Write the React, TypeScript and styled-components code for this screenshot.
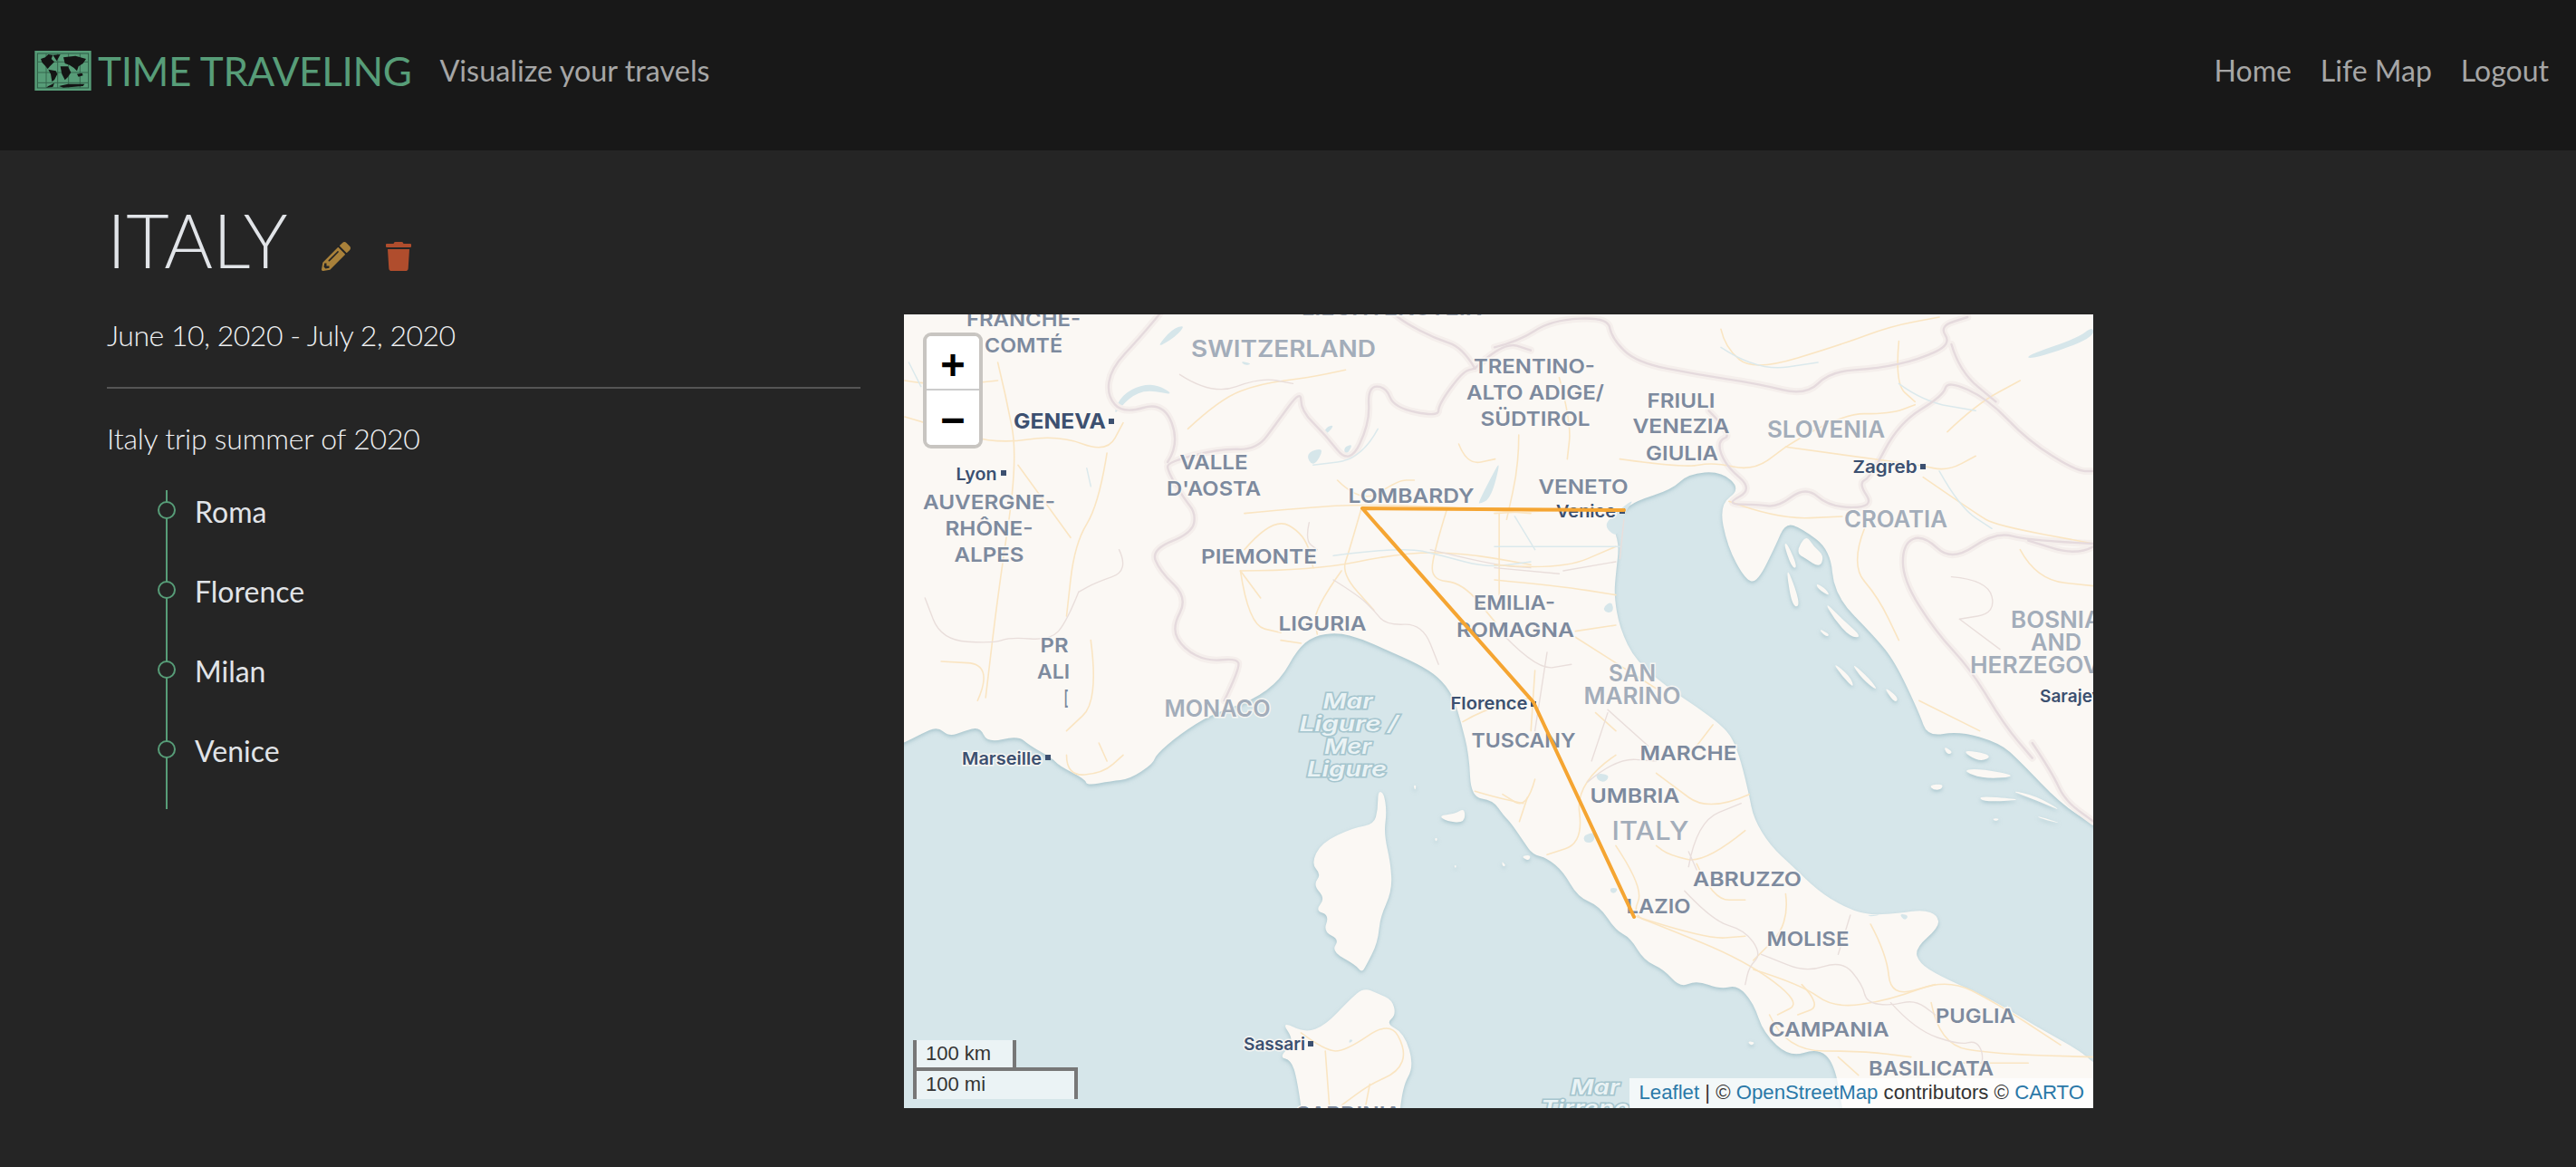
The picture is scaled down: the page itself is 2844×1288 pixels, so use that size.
import React from "react";
import styled, { createGlobalStyle } from "styled-components";
import { FaPencilAlt, FaTrash } from "react-icons/fa";

const GlobalStyle = createGlobalStyle`
  html, body {
    margin: 0;
    padding: 0;
    background: #252525;
  }
  body {
    font-family: "Lato", "Liberation Sans", sans-serif;
    color: #e1e4e8;
  }
`;

const Page = styled.div`
  width: 2844px;
  height: 1288px;
  overflow: hidden;
  background: #252525;
`;

const NavBar = styled.nav`
  height: 166px;
  display: flex;
  align-items: center;
  justify-content: space-between;
  padding: 0 30px 11px 38px;
  background: #181818;
  box-sizing: border-box;
`;

const Brand = styled.div`
  display: flex;
  align-items: center;
`;

const LogoMark = styled.svg`
  width: 63px;
  height: 44px;
`;

const BrandName = styled.span`
  margin-left: 7px;
  font-size: 44px;
  font-weight: 400;
  letter-spacing: -0.35px;
  color: #579d78;
  line-height: 1;
`;

const Tagline = styled.span`
  margin-left: 31px;
  font-size: 32.4px;
  color: #a6a6a6;
`;

const NavLinks = styled.div`
  display: flex;
  gap: 32px;
`;

const NavLink = styled.a`
  font-size: 32px;
  color: #a6a6a6;
`;

const Content = styled.main`
  padding: 0 0 0 118px;
`;

const TitleRow = styled.div`
  height: 181px;
  display: flex;
  align-items: flex-start;
`;

const Title = styled.h1`
  margin: 58px 0 0 0;
  font-size: 82px;
  line-height: 80px;
  font-weight: 300;
  color: #e1e4e8;
`;

const IconButton = styled.span<{ $color: string; $gap: number }>`
  display: flex;
  margin: 101px 0 0 ${({ $gap }) => $gap}px;
  color: ${({ $color }) => $color};
  font-size: 32px;
`;

const Columns = styled.div`
  display: grid;
  grid-template-columns: 832px 1313px;
  column-gap: 48px;
`;

const Summary = styled.section`
  display: flex;
  flex-direction: column;
`;

const DateRange = styled.p`
  margin: 0;
  padding-top: 3px;
  font-size: 32px;
  line-height: 40px;
  font-weight: 300;
  letter-spacing: -0.5px;
  color: #eef0f2;
`;

const Divider = styled.hr`
  width: 100%;
  height: 2px;
  margin: 37px 0 0 0;
  border: 0;
  background: #555;
`;

const Description = styled.p`
  margin: 35px 0 0 0;
  font-size: 32px;
  line-height: 40px;
  font-weight: 300;
  letter-spacing: -0.2px;
  color: #eef0f2;
`;

const Timeline = styled.ul`
  position: relative;
  width: fit-content;
  margin: 37px 0 0 65px;
  padding: 0;
  list-style: none;
  border-left: 2px solid #579d78;
`;

const Stop = styled.li`
  position: relative;
  height: 88px;
  padding-left: 30px;
  font-size: 32px;
  line-height: 48px;
  color: #e1e4e8;

  &::before {
    content: "";
    position: absolute;
    left: -11px;
    top: 12px;
    width: 16px;
    height: 16px;
    border: 2px solid #579d78;
    border-radius: 50%;
    background: #252525;
  }
`;

const MapFrame = styled.div`
  position: relative;
  width: 1313px;
  height: 876px;
  overflow: hidden;
  background: #d6e6ea;
`;

const MapCanvas = styled.svg`
  display: block;
  width: 100%;
  height: 100%;
`;

const LandMass = styled.g`
  fill: #fbf8f4;
  filter: drop-shadow(0 2px 2px rgba(130, 170, 180, 0.55));
`;

const Water = styled.path`
  fill: #d6e6ea;
`;

const lineStyles = {
  road: "stroke: #fae5c2; stroke-width: 1.6px;",
  river: "stroke: #dbe9ec; stroke-width: 1.5px;",
  region: "stroke: #e9dedb; stroke-width: 1.4px;",
  halo: "stroke: #f5efec; stroke-width: 8px;",
  border: "stroke: #e5dadd; stroke-width: 2.4px;",
};

const MapLine = styled.path<{ $kind: keyof typeof lineStyles }>`
  fill: none;
  stroke-linejoin: round;
  stroke-linecap: round;
  vector-effect: non-scaling-stroke;
  ${({ $kind }) => lineStyles[$kind]}
`;

const labelStyles = {
  region: "fill: #7d8a9e; font-weight: 600; font-size: 22px;",
  country: "fill: #a3adba; font-weight: 600; font-size: 25px;",
  big: "fill: #a3adba; font-weight: 500; font-size: 28px;",
  city: "fill: #3c5070; font-weight: 600; font-size: 19px;",
  capital: "fill: #3c5070; font-weight: 700; font-size: 23px;",
  sea: "fill: #eaf3f5; stroke: #a5c5ce !important; font-weight: 600; font-style: italic; font-size: 23px;",
};

const MapLabel = styled.text<{ $kind: keyof typeof labelStyles }>`
  font-family: "Inter", "Liberation Sans", sans-serif;
  text-anchor: middle;
  paint-order: stroke;
  stroke: rgba(251, 248, 244, 0.85);
  stroke-width: 3px;
  ${({ $kind }) => labelStyles[$kind]}
`;

const CityDot = styled.rect`
  fill: #3c5070;
`;

const Route = styled.polyline`
  fill: none;
  stroke: #f5a532;
  stroke-width: 4px;
  stroke-linejoin: round;
  stroke-linecap: round;
`;

const ZoomControl = styled.div`
  position: absolute;
  top: 20px;
  left: 21px;
  display: flex;
  flex-direction: column;
  border: 4px solid #c8c5c1;
  border-radius: 9px;
  overflow: hidden;
`;

const ZoomButton = styled.a`
  box-sizing: border-box;
  width: 58px;
  height: 60px;
  padding-top: 4px;
  display: flex;
  align-items: center;
  justify-content: center;
  background: #fff;
  color: #000;
  font-family: "DejaVu Sans Mono", "Liberation Mono", monospace;
  font-size: 44px;
  font-weight: 700;
  line-height: 56px;

  &:first-child {
    border-bottom: 2px solid #ccc;
  }
`;

const ScaleControl = styled.div`
  position: absolute;
  left: 10px;
  bottom: 10px;
  display: flex;
  flex-direction: column;
  align-items: flex-start;
`;

const ScaleLine = styled.div<{ $width: number; $lower?: boolean }>`
  box-sizing: border-box;
  width: ${({ $width }) => $width}px;
  height: ${({ $lower }) => ($lower ? 35 : 34)}px;
  margin-top: ${({ $lower }) => ($lower ? -4 : 0)}px;
  padding: 0 10px;
  border: 4px solid #777;
  border-top-width: ${({ $lower }) => ($lower ? 4 : 0)}px;
  border-bottom-width: ${({ $lower }) => ($lower ? 0 : 4)}px;
  background: rgba(255, 255, 255, 0.5);
  font-family: "Liberation Sans", Arial, sans-serif;
  font-size: 22px;
  line-height: 30px;
  color: #333;
`;

const Attribution = styled.div`
  position: absolute;
  right: 0;
  bottom: 0;
  height: 33px;
  padding: 0 10px;
  background: rgba(255, 255, 255, 0.7);
  font-family: "Liberation Sans", Arial, sans-serif;
  font-size: 22.2px;
  line-height: 31px;
  color: #333;
  white-space: nowrap;
`;

const AttributionLink = styled.a`
  color: #2a78a8;
`;

// rounds a traced M/L outline into quadratic curves so the coast doesn't look faceted
const smooth = (d: string) =>
  d
    .split(/(?=M)/)
    .map((sub) => {
      const closed = sub.trim().endsWith("Z");
      const pts = [...sub.matchAll(/(-?[\d.]+)[ ,](-?[\d.]+)/g)].map((m) => [Number(m[1]), Number(m[2])]);
      const mid = (a: number[], b: number[]) => `${(a[0] + b[0]) / 2} ${(a[1] + b[1]) / 2}`;
      if (pts.length < 3) return sub;
      if (closed) {
        let out = `M${mid(pts[pts.length - 1], pts[0])}`;
        pts.forEach((p, i) => {
          out += `Q${p[0]} ${p[1]} ${mid(p, pts[(i + 1) % pts.length])}`;
        });
        return out + "Z";
      }
      let out = `M${pts[0][0]} ${pts[0][1]}`;
      for (let i = 1; i < pts.length - 1; i++) {
        out += `Q${pts[i][0]} ${pts[i][1]} ${mid(pts[i], pts[i + 1])}`;
      }
      const last = pts[pts.length - 1];
      return `${out}L${last[0]} ${last[1]}`;
    })
    .join("");

// crop sheets: the route and outlines were traced per quadrant of the map
const sheets = {
  nw: "translate(990 340) scale(.4464 .3333)",
  ne: "translate(1650 340) scale(.4464 .3333)",
  sw: "translate(990 820) scale(.4464 .3333)",
  se: "translate(1650 820) scale(.4464 .3333)",
};

const mapLines: { sheet: keyof typeof sheets; kind: keyof typeof lineStyles; d: string }[] = [
  { sheet: "nw", kind: "road", d: "M250 180L270 290L300 500L250 950L220 1290" },
  { sheet: "nw", kind: "road", d: "M20 360L120 400L250 450L400 420L520 480L560 380" },
  { sheet: "nw", kind: "road", d: "M520 480L500 650L440 780L420 1020" },
  { sheet: "nw", kind: "road", d: "M20 240L110 260L250 240M300 520L430 760" },
  { sheet: "nw", kind: "road", d: "M720 400L800 300L900 250L1020 230L1110 205" },
  { sheet: "nw", kind: "road", d: "M860 680L1020 660L1150 650L1380 660L1568 680" },
  { sheet: "nw", kind: "road", d: "M860 800L930 690L1010 750L1030 860" },
  { sheet: "nw", kind: "road", d: "M850 870L1030 870L1250 810L1400 810L1568 850" },
  { sheet: "nw", kind: "road", d: "M850 870L870 1050L950 1075M850 870L900 960" },
  { sheet: "nw", kind: "road", d: "M1100 870L1030 1000L1040 1080" },
  { sheet: "nw", kind: "road", d: "M1150 660L1120 800L1100 880L1180 1000" },
  { sheet: "nw", kind: "road", d: "M1090 570L1150 650L1240 570L1280 570" },
  { sheet: "nw", kind: "road", d: "M1360 670L1330 800L1320 900L1400 910L1480 1040" },
  { sheet: "nw", kind: "road", d: "M1490 680L1490 950M1390 450L1410 520L1480 500" },
  { sheet: "nw", kind: "road", d: "M480 1100L500 1300L420 1400M200 1300L240 1180L110 1170" },
  { sheet: "nw", kind: "road", d: "M1400 1370L1450 1330L1568 1290M950 1100L1000 1110" },
  { sheet: "nw", kind: "river", d: "M30 180L60 260M470 530L480 590M1190 400L1150 500L1030 520" },
  { sheet: "nw", kind: "river", d: "M1080 820L1250 790L1350 820L1460 860L1568 840" },
  { sheet: "nw", kind: "region", d: "M450 940L420 1040L380 1100L280 1090L240 1110L110 1100L70 960" },
  { sheet: "nw", kind: "region", d: "M550 800L575 870L490 910L450 940M700 220L780 290L900 230L980 250" },
  { sheet: "nw", kind: "region", d: "M1080 900L1140 950L1180 1000L1210 1050L1300 1045L1340 1180" },
  { sheet: "nw", kind: "region", d: "M1020 710L1010 770L1040 800M1320 800L1470 850L1568 860" },
  { sheet: "ne", kind: "road", d: "M60 420L60 520L30 700M160 230L190 380L180 500" },
  { sheet: "ne", kind: "road", d: "M0 680L140 670L310 670M310 500L470 530L540 510L640 540L720 460" },
  { sheet: "ne", kind: "road", d: "M720 460L850 350L980 350L1040 320M1000 110L990 250L1040 310" },
  { sheet: "ne", kind: "road", d: "M720 460L880 490L1050 520L1120 540L1190 490" },
  { sheet: "ne", kind: "road", d: "M1060 560L1190 680L1240 720L1481 780M1120 410L1190 320L1300 240" },
  { sheet: "ne", kind: "road", d: "M580 640L700 700L860 690M915 730L880 850L950 960L1000 1100" },
  { sheet: "ne", kind: "road", d: "M560 70L570 130L640 210L860 120L980 60L1100 30" },
  { sheet: "ne", kind: "road", d: "M0 900L160 920L300 950M0 850L160 870L300 790M200 1070L300 1050" },
  { sheet: "ne", kind: "road", d: "M200 1090L400 1260M100 1200L90 1400M250 1340L300 1400M540 1380L500 1450" },
  { sheet: "ne", kind: "road", d: "M1300 800L1340 900L1481 920M1050 1300L1200 1400" },
  { sheet: "ne", kind: "river", d: "M560 130L650 210L800 180M1000 250L1060 310L1190 340M1100 540L1150 660L1230 730" },
  { sheet: "ne", kind: "river", d: "M0 790L200 790L310 790M50 690L100 800" },
  { sheet: "ne", kind: "region", d: "M320 700L310 830M160 880L0 860M170 870L300 840" },
  { sheet: "ne", kind: "region", d: "M1150 1030L1250 1130M1130 890L1220 900L1240 1010L1150 1030M0 1050L100 1200L190 1180" },
  { sheet: "ne", kind: "region", d: "M100 1400L130 1140M280 1330L380 1450M240 1500L280 1340" },
  { sheet: "se", kind: "road", d: "M100 120L80 220L20 170M300 40L200 130L220 330L130 370" },
  { sheet: "se", kind: "road", d: "M300 340L370 480L340 570L400 600L620 720L760 860L700 900" },
  { sheet: "se", kind: "road", d: "M340 570L520 650L620 640M500 400L540 520L620 520M720 500L730 600L640 720" },
  { sheet: "se", kind: "road", d: "M630 170L530 230L430 130L400 100M620 290L520 400L430 370L400 340" },
  { sheet: "se", kind: "road", d: "M640 750L760 800L840 880L980 850L1120 780L1240 860L1400 1000" },
  { sheet: "se", kind: "road", d: "M680 900L720 1020L910 1020L1030 1040M930 600L970 700L980 840L1090 800" },
  { sheet: "se", kind: "road", d: "M760 800L810 870L750 900M1080 860L1100 1000L1240 1030L1481 1040" },
  { sheet: "se", kind: "road", d: "M850 1040L900 1100M1150 1060L1320 1060" },
  { sheet: "se", kind: "region", d: "M230 130L300 50L400 60M480 410L500 260L610 200M480 360L500 420" },
  { sheet: "se", kind: "region", d: "M470 490L540 590L620 620L660 700L630 740L620 800" },
  { sheet: "se", kind: "region", d: "M660 700L680 710L770 760L860 720L910 800L920 860L980 870L1040 850L1090 900" },
  { sheet: "se", kind: "region", d: "M880 570L850 700M980 860L1040 950L1150 1000L1190 985L1210 1030L1200 1100" },
  { sheet: "sw", kind: "road", d: "M420 40L420 110L510 100L560 40M500 0L520 60" },
  { sheet: "sw", kind: "road", d: "M1000 960L1060 1020L1110 1020L1220 920L1260 1020L1240 1090L1170 1130L1100 1200" },
  { sheet: "sw", kind: "road", d: "M1060 1020L1070 1200M1170 1130L1160 1200" },
  { sheet: "sw", kind: "road", d: "M1430 160L1480 180L1550 200M1540 260L1560 180" },
];

const borderLines: { sheet: keyof typeof sheets; d: string }[] = [
  { sheet: "nw", d: "M810 1300L850 1190L840 1160L770 1170L710 1130L680 1060L720 960L650 870L630 800L730 745L740 680L710 630L670 540L670 510L800 465L890 470L940 380L1000 270L1000 340L1060 420L1120 520L1170 380L1165 260L1210 260L1230 330L1340 360L1340 320L1400 210L1430 200" },
  { sheet: "nw", d: "M670 510L700 450L660 310L560 350L520 290L530 200L600 100L650 20" },
  { sheet: "nw", d: "M1430 200L1400 130L1330 100L1260 50L1230 20" },
  { sheet: "nw", d: "M1430 200L1500 110L1568 140" },
  { sheet: "ne", d: "M0 130L60 110L140 40L280 30L290 100L350 180L500 220L650 250L770 290L830 210L950 200L1050 170L1130 120L1100 60L1170 30" },
  { sheet: "ne", d: "M530 340L590 420L550 440L570 520L640 600L570 650L650 650L700 660L770 590L830 660L940 660L900 580L930 560L1000 380L1110 290L1120 240L1220 300L1320 440L1440 540L1481 540" },
  { sheet: "ne", d: "M1130 120L1150 210L1240 310" },
  { sheet: "ne", d: "M1481 780L1320 770L1240 740L1130 840L1060 750L1010 780L1010 900L1090 1070L1180 1200L1260 1380L1330 1490" },
  { sheet: "ne", d: "M1481 790L1440 820L1320 770" },
  { sheet: "se", d: "M1330 0L1380 100L1410 190L1481 260" },
];

const labels: { kind: keyof typeof labelStyles; text: string; x: number; y: number; w: number }[] = [
  { kind: "region", text: "FRANCHE-", x: 1130, y: 360, w: 126 },
  { kind: "region", text: "COMTÉ", x: 1130, y: 389, w: 86 },
  { kind: "country", text: "SWITZERLAND", x: 1417, y: 394, w: 204 },
  { kind: "country", text: "LIECHTENSTEIN", x: 1537, y: 348, w: 200 },
  { kind: "capital", text: "GENEVA", x: 1170, y: 473, w: 102 },
  { kind: "city", text: "Lyon", x: 1078, y: 530, w: 45 },
  { kind: "region", text: "AUVERGNE-", x: 1092, y: 562, w: 146 },
  { kind: "region", text: "RHÔNE-", x: 1092, y: 591, w: 97 },
  { kind: "region", text: "ALPES", x: 1092, y: 620, w: 77 },
  { kind: "region", text: "VALLE", x: 1340, y: 518, w: 75 },
  { kind: "region", text: "D'AOSTA", x: 1340, y: 547, w: 104 },
  { kind: "region", text: "LOMBARDY", x: 1558, y: 555, w: 139 },
  { kind: "region", text: "PIEMONTE", x: 1390, y: 622, w: 128 },
  { kind: "region", text: "LIGURIA", x: 1460, y: 696, w: 97 },
  { kind: "region", text: "PR", x: 1164, y: 720, w: 31 },
  { kind: "region", text: "ALI", x: 1163, y: 749, w: 36 },
  { kind: "region", text: "[", x: 1177, y: 778, w: 5 },
  { kind: "country", text: "MONACO", x: 1344, y: 791, w: 117 },
  { kind: "sea", text: "Mar", x: 1488, y: 782, w: 55 },
  { kind: "sea", text: "Ligure /", x: 1489, y: 807, w: 109 },
  { kind: "sea", text: "Mer", x: 1488, y: 832, w: 52 },
  { kind: "sea", text: "Ligure", x: 1487, y: 857, w: 88 },
  { kind: "city", text: "Florence", x: 1644, y: 783, w: 85 },
  { kind: "region", text: "TUSCANY", x: 1682, y: 825, w: 115 },
  { kind: "region", text: "EMILIA-", x: 1672, y: 673, w: 90 },
  { kind: "region", text: "ROMAGNA", x: 1673, y: 703, w: 130 },
  { kind: "region", text: "TRENTINO-", x: 1694, y: 412, w: 134 },
  { kind: "region", text: "ALTO ADIGE/", x: 1695, y: 441, w: 152 },
  { kind: "region", text: "SÜDTIROL", x: 1695, y: 470, w: 121 },
  { kind: "region", text: "FRIULI", x: 1856, y: 450, w: 75 },
  { kind: "region", text: "VENEZIA", x: 1856, y: 478, w: 107 },
  { kind: "region", text: "GIULIA", x: 1857, y: 508, w: 80 },
  { kind: "region", text: "VENETO", x: 1748, y: 545, w: 99 },
  { kind: "city", text: "Venice", x: 1751, y: 571, w: 66 },
  { kind: "country", text: "SLOVENIA", x: 2016, y: 483, w: 130 },
  { kind: "city", text: "Zagreb", x: 2081, y: 522, w: 71 },
  { kind: "country", text: "CROATIA", x: 2093, y: 582, w: 114 },
  { kind: "country", text: "BOSNIA", x: 2270, y: 693, w: 100 },
  { kind: "country", text: "AND", x: 2270, y: 718, w: 56 },
  { kind: "country", text: "HERZEGOVINA", x: 2270, y: 743, w: 190 },
  { kind: "city", text: "Sarajevo", x: 2292, y: 775, w: 80 },
  { kind: "country", text: "SAN", x: 1802, y: 752, w: 52 },
  { kind: "country", text: "MARINO", x: 1802, y: 777, w: 107 },
  { kind: "region", text: "MARCHE", x: 1864, y: 839, w: 107 },
  { kind: "region", text: "UMBRIA", x: 1805, y: 886, w: 99 },
  { kind: "big", text: "ITALY", x: 1822, y: 927, w: 85 },
  { kind: "region", text: "ABRUZZO", x: 1929, y: 978, w: 120 },
  { kind: "region", text: "LAZIO", x: 1831, y: 1008, w: 71 },
  { kind: "region", text: "MOLISE", x: 1996, y: 1044, w: 91 },
  { kind: "region", text: "CAMPANIA", x: 2019, y: 1144, w: 133 },
  { kind: "region", text: "PUGLIA", x: 2181, y: 1129, w: 88 },
  { kind: "region", text: "BASILICATA", x: 2132, y: 1187, w: 138 },
  { kind: "sea", text: "Mar", x: 1761, y: 1208, w: 54 },
  { kind: "sea", text: "Tirreno", x: 1750, y: 1231, w: 98 },
  { kind: "city", text: "Marseille", x: 1106, y: 844, w: 88 },
  { kind: "city", text: "Sassari", x: 1407, y: 1159, w: 68 },
  { kind: "region", text: "SARDINIA", x: 1489, y: 1237, w: 116 },
];

const cityDots = [
  [1224, 462],
  [1105, 519],
  [1788, 561],
  [1690, 774],
  [2120, 512],
  [1154, 833],
  [1444, 1149],
];

const routePoints = "1804,1012 1693,775 1504,561 1793,563";

const mainland =
  "M970 830L998 820L1017 810L1035 802L1048 813L1064 807L1082 802L1090 820L1124 812L1137 823L1162 837L1169 845L1198 860L1200 867L1227 862L1247 860L1273 843L1276 833L1303 810L1338 788L1383 773L1414 750L1432 717L1450 702L1477 698L1503 705L1530 717L1566 733L1588 747L1604 767L1613 797L1622 833L1624 880L1648 883L1660 900L1668 908L1683 930L1692 943L1708 947L1726 962L1742 990L1766 1000L1784 1027L1800 1035L1815 1060L1837 1070L1855 1090L1873 1082L1900 1092L1918 1087L1936 1107L1947 1140L1976 1167L2007 1157L2025 1173L2034 1223L2040 1260L2060 1260L2320 1260L2340 1260L2340 1240L2340 1190L2311 1173L2297 1160L2248 1133L2199 1103L2141 1077L2119 1063L2114 1047L2141 1023L2139 1010L2123 1004L2096 1008L2061 1010L2034 1000L2007 983L1980 957L1954 933L1936 903L1931 877L1922 840L1913 815L1900 800L1873 780L1847 763L1806 730L1788 693L1782 657L1784 633L1788 597L1775 573L1793 563L1806 553L1846 540L1864 523L1900 520L1922 540L1898 557L1907 603L1927 640L1940 643L1960 603L1971 577L1989 583L2021 607L2025 657L2070 703L2092 730L2119 787L2128 813L2163 807L2208 820L2230 840L2275 887L2311 910L2340 930L2340 320L2340 300L2320 300L990 300L970 300L970 320Z";

const islands: { sheet: keyof typeof sheets; d: string }[] = [
  { sheet: "sw", d: "M1190 160L1205 165L1212 230L1205 300L1222 400L1225 490L1195 580L1190 660L1160 740L1150 760L1135 735L1075 690L1095 650L1055 625L1070 570L1035 555L1060 515L1030 470L1050 435L1025 400L1050 330L1130 280L1180 270L1190 220Z" },
  { sheet: "sw", d: "M1155 810L1190 830L1225 850L1235 900L1210 930L1255 960L1280 1070L1250 1140L1240 1300L1010 1300L990 1110L975 1050L945 1040L985 990L950 920L1010 960L1060 935L1120 850Z" },
  { sheet: "sw", d: "M1340 240L1380 235L1405 215L1405 265L1360 260Z" },
  { sheet: "sw", d: "M1278 140L1285 140L1282 158Z" },
  { sheet: "sw", d: "M1330 315L1338 315L1334 328ZM1378 405L1385 405L1382 416ZM1498 390L1505 410L1497 405Z" },
  { sheet: "se", d: "M65 375L90 370L85 392ZM20 395L28 405L22 410ZM625 988L645 990L635 1003Z" },
  { sheet: "ne", d: "M715 780L725 780L750 860L735 860ZM720 850L745 930L755 990L735 985ZM745 810L770 750L790 790L815 820L805 860L770 830Z" },
  { sheet: "ne", d: "M795 910L820 930L830 955L800 930ZM815 970L860 1030L910 1090L880 1090L840 1030ZM800 1060L830 1080L820 1090Z" },
  { sheet: "ne", d: "M835 1170L880 1220L890 1260L860 1220ZM880 1170L930 1230L950 1270L910 1230ZM960 1250L1000 1290L990 1310Z" },
  { sheet: "se", d: "M1110 10L1135 30L1120 40ZM1150 20L1235 40L1200 65ZM1155 90L1200 85L1300 110L1210 120ZM1075 140L1110 135L1105 155L1085 155Z" },
  { sheet: "se", d: "M1195 175L1290 185L1290 190L1210 195ZM1270 155L1340 175L1410 230L1340 190ZM1340 240L1410 270L1350 250ZM1230 250L1250 250L1240 260Z" },
];

const lakes: { sheet: keyof typeof sheets; d: string }[] = [
  { sheet: "nw", d: "M535 360L550 300L590 260L640 250L690 290L620 270L575 295Z" },
  { sheet: "nw", d: "M640 135L680 70L715 55L690 95ZM1010 480L1060 460L1030 530ZM1440 640L1470 560L1495 500L1470 630L1440 650Z" },
  { sheet: "nw", d: "M1060 395L1085 385L1055 430ZM1105 460L1130 450L1110 490ZM850 175L880 185L860 190Z" },
  { sheet: "ne", d: "M1320 155L1440 100L1481 60L1481 95L1400 140L1320 170Z" },
  { sheet: "ne", d: "M280 700L350 625L320 680L305 760L275 730ZM268 990L290 970L295 1005L275 1010Z" },
  { sheet: "se", d: "M250 100L285 105L275 130L255 125ZM220 305L250 295L245 330L222 330ZM285 480L305 480L300 497L288 497Z" },
  { sheet: "se", d: "M1000 565L1025 570L1015 590ZM920 570L960 568L930 575Z" },
  { sheet: "sw", d: "M1120 980L1130 985L1118 995Z" },
];

const App: React.FC = () => {
  const stops = ["Roma", "Florence", "Milan", "Venice"];

  return (
    <Page>
      <GlobalStyle />
      <NavBar>
        <Brand>
          <LogoMark viewBox="0 0 187 132">
            <rect width="187" height="132" fill="#579d78" />
            <rect x="9" y="9" width="169" height="114" fill="none" stroke="#2c5a44" strokeWidth="3" />
            <path d="M9 37H178M9 72H178M9 106H178M38 9V123M76 9V123M112 9V123M150 9V123" stroke="#37674f" strokeWidth="3" fill="none" />
            <path
              d="M20 27L35 22L45 12L60 14L55 27L65 37L50 52L43 60L35 50L25 40ZM45 62L70 67L75 77L65 97L57 102L53 77ZM60 14L85 12L73 34ZM95 22L135 17L170 27L160 42L145 52L140 67L130 57L115 47L100 42ZM85 52L110 52L120 72L110 87L100 97L90 77ZM140 77L157 74L160 82L145 86ZM45 117L65 107L60 120L38 122ZM80 117L110 110L165 110L160 117L95 122Z"
              fill="#141414"
            />
          </LogoMark>
          <BrandName>TIME TRAVELING</BrandName>
          <Tagline>Visualize your travels</Tagline>
        </Brand>
        <NavLinks>
          <NavLink>Home</NavLink>
          <NavLink>Life Map</NavLink>
          <NavLink>Logout</NavLink>
        </NavLinks>
      </NavBar>
      <Content>
        <TitleRow>
          <Title>ITALY</Title>
          <IconButton $color="#a9813a" $gap={38}>
            <FaPencilAlt />
          </IconButton>
          <IconButton $color="#b04d2d" $gap={37}>
            <FaTrash />
          </IconButton>
        </TitleRow>
        <Columns>
          <Summary>
            <DateRange>June 10, 2020 - July 2, 2020</DateRange>
            <Divider />
            <Description>Italy trip summer of 2020</Description>
            <Timeline>
              {stops.map((stop) => (
                <Stop key={stop}>{stop}</Stop>
              ))}
            </Timeline>
          </Summary>
          <MapFrame>
            <MapCanvas viewBox="998 347 1313 876">
              <LandMass>
                <path d={smooth(mainland)} />
                {islands.map((island, i) => (
                  <path key={i} d={smooth(island.d)} transform={sheets[island.sheet]} />
                ))}
              </LandMass>
              {lakes.map((lake, i) => (
                <Water key={i} d={smooth(lake.d)} transform={sheets[lake.sheet]} />
              ))}
              {borderLines.map((line, i) => (
                <MapLine key={i} $kind="halo" d={smooth(line.d)} transform={sheets[line.sheet]} />
              ))}
              {mapLines.map((line, i) => (
                <MapLine key={i} $kind={line.kind} d={smooth(line.d)} transform={sheets[line.sheet]} />
              ))}
              {borderLines.map((line, i) => (
                <MapLine key={i} $kind="border" d={smooth(line.d)} transform={sheets[line.sheet]} />
              ))}
              {labels.map((label) => (
                <MapLabel
                  key={label.text + label.x}
                  $kind={label.kind}
                  x={label.x}
                  y={label.y}
                  textLength={label.w}
                  lengthAdjust="spacingAndGlyphs"
                >
                  {label.text}
                </MapLabel>
              ))}
              {cityDots.map(([x, y]) => (
                <CityDot key={x} x={x} y={y} width={6} height={6} />
              ))}
              <Route points={routePoints} />
            </MapCanvas>
            <ZoomControl>
              <ZoomButton>+</ZoomButton>
              <ZoomButton>−</ZoomButton>
            </ZoomControl>
            <ScaleControl>
              <ScaleLine $width={114}>100 km</ScaleLine>
              <ScaleLine $width={182} $lower>
                100 mi
              </ScaleLine>
            </ScaleControl>
            <Attribution>
              <AttributionLink>Leaflet</AttributionLink> | © <AttributionLink>OpenStreetMap</AttributionLink>{" "}
              contributors © <AttributionLink>CARTO</AttributionLink>
            </Attribution>
          </MapFrame>
        </Columns>
      </Content>
    </Page>
  );
};

export default App;
